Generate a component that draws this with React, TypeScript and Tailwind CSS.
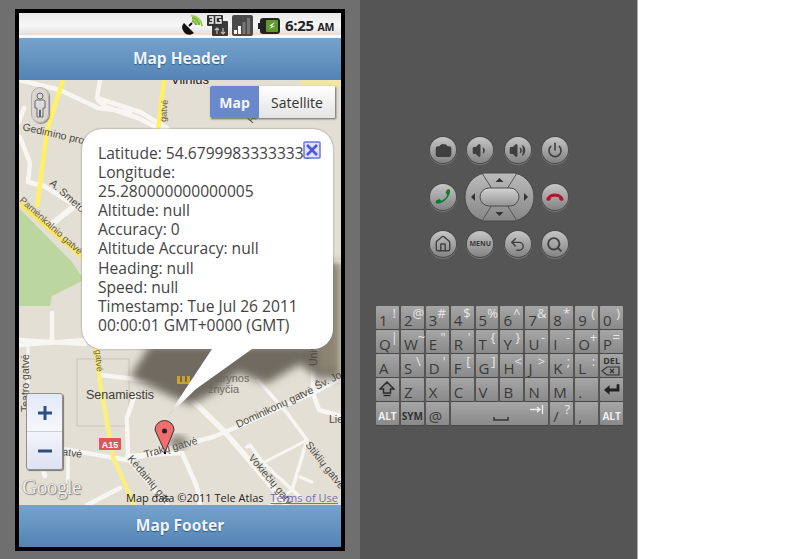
import { Camera, Home, Power, Search, Undo2, Volume1, Volume2 } from "lucide-react";

const keyRows = [
  [["1", "!"], ["2", "@"], ["3", "#"], ["4", "$"], ["5", "%"], ["6", "^"], ["7", "&"], ["8", "*"], ["9", "("], ["0", ")"]],
  [["Q", "|"], ["W", "~"], ["E", '"'], ["R", "'"], ["T", "{"], ["Y", "}"], ["U", "-"], ["I", "-"], ["O", "+"], ["P", "="]],
  [["A", ""], ["S", "\\"], ["D", "'"], ["F", "["], ["G", "]"], ["H", "<"], ["J", ">"], ["K", ";"], ["L", ":"]],
  [["Z", ""], ["X", ""], ["C", ""], ["V", ""], ["B", ""], ["N", ""], ["M", ""], [".", ""]],
];

const bubbleLines = [
  "Latitude: 54.67999833333333",
  "Longitude:",
  "25.280000000000005",
  "Altitude: null",
  "Accuracy: 0",
  "Altitude Accuracy: null",
  "Heading: null",
  "Speed: null",
  "Timestamp: Tue Jul 26 2011",
  "00:00:01 GMT+0000 (GMT)",
];

const keyClass =
  "flex h-[23px] justify-between rounded-[1px] bg-gradient-to-b from-[#a6a6a6] to-[#8a8a8a] px-[3px] shadow-[0_1px_0_#484848]";

function Key({ main, alt }: { main: string; alt: string }) {
  return (
    <div className={keyClass}>
      <span className="self-end text-[15px] leading-[18px] text-[#3a3a3a]">{main}</span>
      <span className="self-start text-[13px] leading-[14px] text-[#e6e6e6]">{alt}</span>
    </div>
  );
}

function Keyboard() {
  return (
    <div className="ml-4 mt-[49px] grid w-[247px] grid-cols-10 gap-x-[2px] gap-y-px">
      {keyRows[0].map(([m, a]) => <Key key={m} main={m} alt={a} />)}
      {keyRows[1].map(([m, a]) => <Key key={m} main={m} alt={a} />)}
      {keyRows[2].map(([m, a]) => <Key key={m} main={m} alt={a} />)}
      <div className={keyClass + " flex-col items-end !justify-center"}>
        <span className="text-[9px] font-bold leading-[10px] text-[#333]">DEL</span>
        <svg width="19" height="10" viewBox="0 0 19 10">
          <path d="M1 5 6 1h12v8H6z" fill="none" stroke="#333" strokeWidth="1.2" />
          <path d="m9 3 4 4m0-4-4 4" stroke="#333" strokeWidth="1.3" />
        </svg>
      </div>
      <div className={keyClass + " items-center !justify-center"}>
        <svg width="16" height="17" viewBox="0 0 16 17">
          <path d="M8 1 15 8h-3.500v4h-7V8H1z" fill="#8d8d8d" stroke="#2d2d2d" strokeWidth="1.500" />
          <path d="M4.500 14.500h7" stroke="#2d2d2d" strokeWidth="1.500" />
        </svg>
      </div>
      {keyRows[3].map(([m, a]) => <Key key={m} main={m} alt={a} />)}
      <div className={keyClass + " items-center !justify-center"}>
        <svg width="18" height="14" viewBox="0 0 18 14">
          <path d="M16 1v6H5" fill="none" stroke="#222" strokeWidth="3" />
          <path d="M7 2 1 7l6 5z" fill="#222" />
        </svg>
      </div>
      <div className={keyClass + " items-end !justify-center pb-[3px]"}>
        <span className="text-[10px] font-bold leading-3 text-[#f0f0f0]">ALT</span>
      </div>
      <div className={keyClass + " items-end !justify-center pb-[3px]"}>
        <span className="text-[10px] font-bold leading-3 text-[#333]">SYM</span>
      </div>
      <Key main="@" alt="" />
      <div className={keyClass + " col-span-4 relative"}>
        <svg className="absolute bottom-[3px] left-[42px]" width="16" height="6" viewBox="0 0 16 6">
          <path d="M1 1v3h14V1" fill="none" stroke="#333" strokeWidth="1.500" />
        </svg>
        <svg className="absolute right-[4px] top-[3px]" width="14" height="9" viewBox="0 0 14 9">
          <path d="M0 4.500h9M7 2l3 2.500L7 7M12.500 0v9" fill="none" stroke="#eee" strokeWidth="1.300" />
        </svg>
      </div>
      <Key main="/" alt="?" />
      <Key main="," alt="" />
      <div className={keyClass + " items-end !justify-center pb-[3px]"}>
        <span className="text-[10px] font-bold leading-3 text-[#f0f0f0]">ALT</span>
      </div>
    </div>
  );
}

function RoundButton({ children }: { children: React.ReactNode }) {
  return (
    <div className="flex h-[26px] w-[26px] items-center justify-center rounded-full bg-gradient-to-b from-[#c6c6c6] to-[#838383] text-[#3f3f3f] shadow-[0_0_0_1px_#4a4a4a,0_1px_0_1px_#777]">
      {children}
    </div>
  );
}

function Dpad() {
  return (
    <svg className="shrink-0" width="71" height="50" viewBox="0 0 71 50">
      <defs>
        <linearGradient id="dpadBody" x1="0" y1="0" x2="0" y2="1">
          <stop offset="0" stopColor="#bcbcbc" />
          <stop offset="1" stopColor="#858585" />
        </linearGradient>
        <linearGradient id="dpadPill" x1="0" y1="0" x2="0" y2="1">
          <stop offset="0" stopColor="#d4d4d4" />
          <stop offset="1" stopColor="#939393" />
        </linearGradient>
      </defs>
      <path d="M20 1h31c12 3 19 13 19 24s-7 21-19 24H20C8 46 1 36 1 25S8 4 20 1z" fill="url(#dpadBody)" stroke="#484848" />
      <path d="M18 1 28 17M53 1 43 17M18 49l10-16M53 49 43 33" stroke="#555" strokeWidth="1" />
      <rect x="16" y="16" width="39" height="18" rx="9" fill="url(#dpadPill)" stroke="#4d4d4d" />
      <path d="M35.500 6l4 4h-8zM35.500 44l4-4h-8zM7 25l4-4v8zM64 25l-4-4v8z" fill="#333" />
    </svg>
  );
}

function NavButtons() {
  return (
    <div className="ml-[70px] mt-[137px] grid w-[138px] grid-cols-4 gap-x-[11px] gap-y-[21px]">
      <RoundButton><Camera size={17} fill="#3f3f3f" stroke="#3f3f3f" /></RoundButton>
      <RoundButton><Volume1 size={17} fill="#3f3f3f" /></RoundButton>
      <RoundButton><Volume2 size={17} fill="#3f3f3f" /></RoundButton>
      <RoundButton><Power size={16} strokeWidth={2.4} /></RoundButton>
      <RoundButton>
        <svg width="18" height="18" viewBox="0 0 17 17">
          <path d="M15 1.500c-1-.5-2.500-.5-3 .5l-1 2.500 1.500 2c-1 2.500-3 4.500-5.500 5.500l-2-1.500-2.500 1c-1 .5-1 2-.5 3 5 2 14.500-6 13-13z" fill="#0f7a35" />
        </svg>
      </RoundButton>
      <div className="col-span-2 flex h-[26px] items-center justify-center">
        <Dpad />
      </div>
      <RoundButton>
        <svg width="20" height="10" viewBox="0 0 19 10">
          <path d="M1 8c-.5-3 3.500-6.500 8.500-6.500S18.500 5 18 8c-.2 1-3.500 1-4 0l-.5-2.500c-2.500-1-5.500-1-8 0L5 8c-.5 1-3.800 1-4 0z" fill="#a81c2a" />
        </svg>
      </RoundButton>
      <RoundButton><Home size={18} strokeWidth={1.8} /></RoundButton>
      <RoundButton><span className="text-[7px] font-bold text-[#3a3a3a]">MENU</span></RoundButton>
      <RoundButton><Undo2 size={17} strokeWidth={2} /></RoundButton>
      <RoundButton><Search size={17} strokeWidth={2.6} /></RoundButton>
    </div>
  );
}

function StatusBar() {
  return (
    <div className="flex h-[25px] items-center justify-end bg-gradient-to-b from-[#e8e8e8] via-[#f7f7f7] to-[#d8d8d8] pr-[7px] shadow-[inset_0_-3px_0_#f9f9f9]">
      {/* dish */}
      <svg width="22" height="21" viewBox="0 0 22 21" className="mr-1">
        <path d="M3 8 13 18c-4 3-8 2-10-1S0 11 3 8z" fill="#111" />
        <path d="M8 11 11 8" stroke="#111" strokeWidth="2" />
        <path d="M11 6a4 4 0 0 1 4 4M11 3a7 7 0 0 1 7 7" fill="none" stroke="#7db52f" strokeWidth="2.500" />
        <path d="M10 .8a10.500 10.500 0 0 1 11 10.500" fill="none" stroke="#93cc3c" strokeWidth="1.500" />
      </svg>
      {/* 3G */}
      <svg width="21" height="21" viewBox="0 0 21 21" className="mr-1">
        <rect x="5" y="6" width="16" height="15" rx="1" fill="#3a3a3a" />
        <rect x="0" y="0" width="16" height="11" rx="1" fill="#333" />
        <path d="M2 2h4v6H2M3 5h3M14 2h-5v6h5V5h-2" fill="none" stroke="#fff" strokeWidth="1.300" />
        <path d="M10 13v6M8 15l2-2 2 2M16 13v6M14 17l2 2 2-2" fill="none" stroke="#bbb" strokeWidth="1.200" />
      </svg>
      {/* signal */}
      <svg width="21" height="21" viewBox="0 0 21 21" className="mr-[5px]">
        <rect width="21" height="21" rx="2" fill="#4a4a4a" />
        <rect x="2" y="15" width="3" height="4" fill="#fff" />
        <rect x="6" y="11" width="3" height="8" fill="#fff" />
        <rect x="10.500" y="7" width="3" height="12" fill="#777" />
        <rect x="15" y="3" width="3" height="16" fill="#777" />
      </svg>
      {/* battery */}
      <svg width="22" height="16" viewBox="0 0 22 16" className="mr-[5px]">
        <rect x="0" y="5" width="3" height="6" fill="#222" />
        <rect x="2" y="0" width="20" height="16" rx="3" fill="#222" />
        <rect x="8" y="2" width="12" height="12" rx="1" fill="#5e9a2c" />
        <path d="M17 4 11 8h3l-3 3 6-3h-3z" fill="#fff" />
      </svg>
      <span className="text-[15px] font-bold leading-none tracking-[-0.3px] text-[#222]">
        6:25 <span className="text-[10.500px]">AM</span>
      </span>
    </div>
  );
}

function BlueBar({ label, height }: { label: string; height: string }) {
  return (
    <div className={"flex items-center justify-center bg-gradient-to-b from-[#76a3cd] to-[#5484b4] text-[15.500px] font-bold text-[#f0f5fa] [text-shadow:0_1px_1px_#2d5a85] " + height}>
      {label}
    </div>
  );
}

function MapCanvas() {
  const road = "#f7f6f2";
  return (
    <svg className="absolute inset-0" width="322" height="425" viewBox="19 80 322 425">
      <defs>
        <filter id="shadowBlur" x="-20%" y="-20%" width="140%" height="140%">
          <feGaussianBlur stdDeviation="4" />
        </filter>
      </defs>
      <rect x="19" y="80" width="322" height="425" fill="#e4dfd4" />
      <path d="M19 208 72 262 84 280 52 296 50 306 19 306z" fill="#bcd6a0" />
      <rect x="77" y="359" width="52" height="67" fill="none" stroke="#c9c4b8" />
      <path d="M300 80h41v7h-41z" fill="#efe6a8" />

      <g fill="none" stroke={road} strokeWidth="4.500" strokeLinejoin="round" strokeLinecap="round">
        <path d="M19 80 60 90 98 108 130 112" />
        <path d="M100 80 97 98 140 112 167 128" />
        <path d="M98 100 106 107 138 118 166 132" />
        <path d="M24 108 19 122" />
        <path d="M20 137 30 163 28 182 44 186 82 210" />
        <path d="M53 223 72 208" strokeWidth="6" />
        <path d="M19 340 85 344" />
        <path d="M52 313 52 342" />
        <path d="M19 345 85 340" />
        <path d="M28 346 28 398" strokeWidth="3" />
        <path d="M100 375 180 384" />
        <path d="M135 394 127 418 128 456 182 453" />
        <path d="M63 449 127 460 213 437 237 427 313 393 341 378" />
        <path d="M127 457 167 505" />
        <path d="M182 453 197 487 200 505" />
        <path d="M87 505 120 488" />
        <path d="M68 455 68 490" strokeWidth="3.500" />
        <path d="M40 460 45 476" />
        <path d="M192 400 223 430 243 453 287 505" strokeWidth="5.500" />
        <path d="M247 447 250 445 263 463 300 497" strokeWidth="3.500" />
        <path d="M258 380 287 413 307 440 292 490" strokeWidth="3.500" />
        <path d="M263 463 307 440" strokeWidth="3" />
        <path d="M313 350 313 393 319 410 341 416" />
        <path d="M300 477 312 482" strokeWidth="3" />
        <path d="M270 505 292 490" strokeWidth="3" />
        <path d="M333 262 341 262" />
      </g>

      <g filter="url(#shadowBlur)">
        <path d="M130 377 150 345 341 345 341 378 318 378 300 364 266 384 238 372 215 392 190 405z" fill="#706b60" />
        <path d="M315 262 341 262 341 370 318 372z" fill="#8b8472" />
      </g>

      <g fill="none" stroke="#fff066" strokeWidth="4.500" strokeLinejoin="round">
        <path d="M63 80 47 130 37 207" />
        <path d="M19 203 82 257" stroke="#f5e66b" />
        <path d="M164 80 158 130" />
        <path d="M96 345 100 383 113 457 134 505" stroke="#f9f082" />
      </g>

      <g fontFamily="'Liberation Sans', sans-serif" fill="#4c4a45" fontSize="10.500">
        <text x="171" y="84" fontSize="13" fill="#222">Vilnius</text>
        <text x="22" y="130" transform="rotate(13 22 130)">Gedimino pros</text>
        <text x="49" y="184" transform="rotate(42 49 184)">A. Smetonos</text>
        <text x="19" y="201" fontSize="9.500" fill="#6d6020" transform="rotate(42 19 201)">Pamėnkalnio gatvė</text>
        <text x="166" y="122" fontSize="9" fill="#6d6020" transform="rotate(-85 166 122)">gatvė</text>
        <text x="95" y="350" fontSize="9" fill="#6d6020" transform="rotate(85 95 350)">gatvė</text>
        <text x="29" y="412" transform="rotate(-90 29 412)">Teatro gatvė</text>
        <text x="86" y="399" fontSize="12.500" fill="#3f3d39">Senamiestis</text>
        <text x="214" y="382" fill="#6a675f" fontSize="11">strynos</text>
        <text x="208" y="393" fill="#6a675f" fontSize="11">žnyčia</text>
        <text x="252" y="124" transform="rotate(-48 252 124)">Ra</text>
        <text x="145" y="458" transform="rotate(-15 145 458)">Trakų gatvė</text>
        <text x="238" y="428" transform="rotate(-25 238 428)">Dominikonų gatvė</text>
        <text x="317" y="366" transform="rotate(-90 317 366)">Univ</text>
        <text x="317" y="390" transform="rotate(-27 317 390)">Šv. Jo</text>
        <text x="329" y="423">Lie</text>
        <text x="305" y="445" transform="rotate(52 305 445)">Stiklių gatvė</text>
        <text x="248" y="458" transform="rotate(50 248 458)">Vokiečių gatv</text>
        <text x="127" y="459" transform="rotate(50 127 459)">Kėdainių gat</text>
        <text x="62" y="455" transform="rotate(8 62 455)">atvė</text>
      </g>

      <rect x="99" y="438" width="22" height="12" rx="1" fill="#e2545c" />
      <text x="110" y="448" textAnchor="middle" fontFamily="'Liberation Sans', sans-serif" fontSize="9" fontWeight="700" fill="#fff">A15</text>
      <path d="M177 376h3v6h2v-6h3v6h2v-6h3v8h-13z" fill="#c9a227" />

      {/* marker */}
      <ellipse cx="178" cy="442" rx="9" ry="6" fill="#5f5c54" opacity="0.8" filter="url(#shadowBlur)" />
      <path d="M165 453 155 431a9.500 9.500 0 1 1 19 0z" fill="#f26d6d" stroke="#333" strokeWidth="1" transform="translate(0 -1)" />
      <circle cx="164.500" cy="431" r="2.500" fill="#222" />
      <path d="M165 452v2" stroke="#111" strokeWidth="2" />
    </svg>
  );
}

function MapControls() {
  return (
    <>
      {/* pegman */}
      <div className="absolute left-[12px] top-[7px] flex h-[36px] w-[18px] items-center justify-center rounded-full border border-[#b5b1a8] bg-[#d8d5ce]/80 shadow-[1px_1px_1px_#888]">
        <svg width="12" height="26" viewBox="0 0 12 26">
          <circle cx="6" cy="4" r="3" fill="#dcdcdc" stroke="#666" />
          <path d="M2.500 8h7l1.500 1v7H9v9H6.500v-7h-1v7H3v-9H1V9z" fill="#dcdcdc" stroke="#666" />
        </svg>
      </div>
      {/* map type */}
      <div className="absolute left-[191px] top-[6px] flex h-[32px] w-[125px] text-[14px] shadow-[1px_1px_2px_#666]">
        <div className="flex w-[49px] items-center justify-center rounded-l-[2px] bg-[#6a88cc] font-bold text-[#f4f6fb]">Map</div>
        <div className="flex flex-1 items-center justify-center rounded-r-[2px] bg-gradient-to-b from-white to-[#e4e4e4] text-[#333]">Satellite</div>
      </div>
      {/* zoom */}
      <div className="absolute left-[7px] top-[313px] flex h-[77px] w-[37px] flex-col rounded-[3px] border border-[#8f8f8f] shadow-[1px_1px_1px_#777]">
        <div className="flex flex-1 items-center justify-center rounded-t-[3px] border-b border-[#c8cfe0] bg-gradient-to-b from-[#e3e9f8] to-[#f6f7fb] text-[#2f4f82]">
          <svg width="14" height="14" viewBox="0 0 14 14"><path d="M7 0v14M0 7h14" stroke="#2f4f82" strokeWidth="3" /></svg>
        </div>
        <div className="flex flex-1 items-center justify-center rounded-b-[3px] bg-gradient-to-b from-[#f3f4fb] to-[#dde2f2]">
          <svg width="14" height="4" viewBox="0 0 14 4"><path d="M0 2h14" stroke="#2f4f82" strokeWidth="3" /></svg>
        </div>
      </div>
      {/* logo + copyright */}
      <span className="absolute left-[3px] top-[394px] font-['Liberation_Serif',serif] text-[21px] leading-[26px] tracking-[-0.5px] text-[#efede8] [text-shadow:0_0_1px_#666,1px_1px_1px_#888]">
        Google
      </span>
      <span className="absolute left-[107px] top-[410px] text-[11px] leading-[15px] text-[#222]">
        Map data ©2011 Tele Atlas
      </span>
      <span className="absolute right-[3px] top-[410px] text-[11px] leading-[15px] text-[#7471b0] underline">
        Terms of Use
      </span>
    </>
  );
}

function Bubble() {
  return (
    <div className="absolute left-[63px] top-[49px]">
      <div className="relative h-[220px] w-[251px] rounded-[20px] bg-white pl-4 pt-[15px] text-[15.600px] leading-[19.100px] text-[#444] shadow-[0_0_2px_#777]">
        {bubbleLines.map((line) => (
          <div key={line} className="whitespace-nowrap">{line}</div>
        ))}
        <svg className="absolute left-[221px] top-[12px]" width="18" height="18" viewBox="0 0 18 18">
          <rect x="1" y="1" width="16" height="16" rx="1" fill="#dfe2fb" stroke="#6a78d8" strokeWidth="1.500" />
          <path d="m4 4 10 10m0-10L4 14" stroke="#4a5ad6" strokeWidth="2.600" />
        </svg>
      </div>
      <svg className="absolute left-[80px] top-[220px]" width="90" height="70" viewBox="0 0 90 70">
        <defs>
          <linearGradient id="tailFade" x1="0" y1="0" x2="0" y2="1">
            <stop offset="0" stopColor="#fff" />
            <stop offset="0.7" stopColor="#fff" />
            <stop offset="1" stopColor="#c9c6bc" />
          </linearGradient>
        </defs>
        <path d="M50 0H90L34 40 5 68z" fill="url(#tailFade)" />
      </svg>
    </div>
  );
}

export default function App() {
  return (
    <div className="flex h-[559px] w-[809px] overflow-hidden bg-white font-['Open_Sans',sans-serif]">
      <div className="h-full w-[360px] bg-[#6f6f6f] px-[15px] pt-[9px]">
        <div className="flex h-[542px] w-[330px] flex-col bg-black p-1">
          <StatusBar />
          <BlueBar label="Map Header" height="h-[42px]" />
          <div className="relative flex-1 overflow-hidden">
            <MapCanvas />
            <MapControls />
            <Bubble />
          </div>
          <BlueBar label="Map Footer" height="h-[42px]" />
        </div>
      </div>
      <div className="h-full w-[278px] border-r border-[#aaa] bg-[#555]">
        <NavButtons />
        <Keyboard />
      </div>
    </div>
  );
}
